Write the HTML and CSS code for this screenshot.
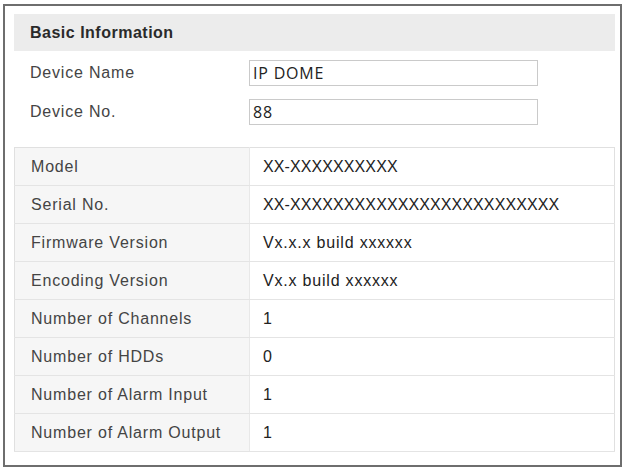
FILE: index.html
```html
<!DOCTYPE html>
<html lang="en">
  <head>
    <title>Basic Information</title>
    <meta charset="utf-8" />
    <meta name="viewport" content="width=device-width" />
    <link rel="stylesheet" href="styles.css">
  </head>
  <body>
    <div class="frame">
      <div class="sectionHead">Basic Information</div>
      <div class="formBox">
        <div class="formRow">
          <label class="formLabel">Device Name</label>
          <input type="text" class="formInput" value="IP DOME" />
        </div>
        <div class="formRow">
          <label class="formLabel">Device No.</label>
          <input type="text" class="formInput" value="88" />
        </div>
      </div>
      <table class="infoTable">
        <tr><th>Model</th><td class="code">XX-XXXXXXXXXX</td></tr>
        <tr><th>Serial No.</th><td class="code">XX-XXXXXXXXXXXXXXXXXXXXXXXXX</td></tr>
        <tr><th>Firmware Version</th><td>Vx.x.x build xxxxxx</td></tr>
        <tr><th>Encoding Version</th><td>Vx.x build xxxxxx</td></tr>
        <tr><th>Number of Channels</th><td>1</td></tr>
        <tr><th>Number of HDDs</th><td>0</td></tr>
        <tr><th>Number of Alarm Input</th><td>1</td></tr>
        <tr><th>Number of Alarm Output</th><td>1</td></tr>
      </table>
    </div>
  </body>
</html>
```

FILE: styles.css
```css
body {
  margin: 0;
  background: #fff;
  font-family: "Liberation Sans", Arial, sans-serif;
  color: #444;
}

.frame {
  box-sizing: border-box;
  margin: 4px 4px 0 3px;
  height: 463px;
  border: 2px solid #6e6e6e;
  padding: 8px 5px 0 9px;
}

.sectionHead {
  height: 37px;
  line-height: 37px;
  background-color: #ececec;
  padding-left: 16px;
  font-size: 16px;
  font-weight: bold;
  letter-spacing: 0.5px;
  color: #2a2a2a;
}

.formBox {
  display: flex;
  flex-direction: column;
  gap: 13px;
  padding: 9px 0 22px;
}

.formRow {
  display: flex;
  align-items: center;
  height: 26px;
}

.formLabel {
  width: 219px;
  padding-left: 16px;
  font-size: 16px;
  letter-spacing: 0.8px;
}

.formInput {
  box-sizing: border-box;
  width: 289px;
  height: 26px;
  margin: 0;
  border: 1px solid #cacaca;
  padding: 0 3px;
  font-family: "Open Sans", sans-serif;
  font-size: 16px;
  letter-spacing: 0.8px;
  color: #222;
  background: #fff;
}

.infoTable {
  width: 100%;
  border-collapse: collapse;
  border: 1px solid #e0e0e0;
}

.infoTable th,
.infoTable td {
  height: 37px;
  padding: 0;
  border-bottom: 1px solid #e4e4e4;
  font-size: 16px;
  font-weight: normal;
  letter-spacing: 0.8px;
  text-align: left;
}

.infoTable th {
  width: 218px;
  padding-left: 16px;
  background-color: #f6f6f6;
  border-right: 1px solid #e8e8e8;
  color: #444;
}

.infoTable td {
  padding-left: 13px;
  color: #222;
}

.infoTable td.code {
  letter-spacing: 0.1px;
}
```
